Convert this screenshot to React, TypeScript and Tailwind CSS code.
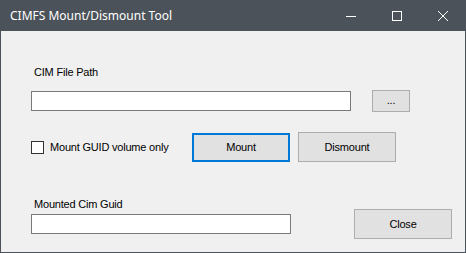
const label = "font-['Liberation_Sans',Arial,sans-serif] text-[11px] leading-[13px] tracking-[-0.2px] text-black";

function CaptionButton({ children }: { children: React.ReactNode }) {
  return <div className="w-[46px] h-full flex items-center justify-center">{children}</div>;
}

function WinButton({ text, className = '' }: { text: string; className?: string }) {
  return (
    <button
      className={`w-[98px] bg-[#e1e1e1] border border-[#adadad] flex items-center justify-center ${label} ${className}`}
    >
      {text}
    </button>
  );
}

export default function App() {
  return (
    <div className="w-[466px] h-[253px] flex flex-col bg-[#4b5259] overflow-hidden">
      {/* Title bar */}
      <div className="h-[31px] shrink-0 flex items-center text-white">
        <span className="pl-[10px] pt-[1px] flex-1 font-['Noto_Sans',sans-serif] text-[12px] leading-none">
          CIMFS Mount/Dismount Tool
        </span>
        <CaptionButton>
          <svg width="10" height="10" viewBox="0 0 10 10">
            <path d="M0 5.5h10" stroke="white" strokeWidth="1" />
          </svg>
        </CaptionButton>
        <CaptionButton>
          <svg width="10" height="10" viewBox="0 0 10 10">
            <rect x="0.5" y="0.5" width="9" height="9" fill="none" stroke="white" strokeWidth="1" />
          </svg>
        </CaptionButton>
        <CaptionButton>
          <svg width="10" height="10" viewBox="0 0 10 10">
            <path d="M0 0L10 10M10 0L0 10" stroke="white" strokeWidth="1" />
          </svg>
        </CaptionButton>
      </div>

      {/* Client area */}
      <div className="flex-1 mx-[1px] mb-[1px] bg-[#f0f0f0] pl-[30px] flex flex-col">
        <div className={`${label} mt-[35px] pl-[3px]`}>CIM File Path</div>

        <div className="mt-[11px] flex items-center gap-[21px]">
          <div className="w-[320px] h-[20px] bg-white border border-[#7a7a7a]" />
          <WinButton text="..." className="!w-[38px] h-[22px] items-end pb-[4px] text-[#444]" />
        </div>

        <div className="mt-[20px] flex items-center">
          <div className="w-[13px] h-[13px] bg-white border border-[#333]" />
          <span className={`${label} ml-[6px] w-[142px]`}>Mount GUID volume only</span>
          <WinButton text="Mount" className="h-[29px] !border-2 !border-[#0078d7]" />
          <WinButton text="Dismount" className="h-[30px] ml-[8px]" />
        </div>

        <div className="mt-auto mb-[18px] flex items-end">
          <div className="flex flex-col">
            <div className={`${label} pl-[3px] mb-[3px]`}>Mounted Cim Guid</div>
            <div className="w-[260px] h-[20px] bg-white border border-[#7a7a7a]" />
          </div>
          <WinButton text="Close" className="h-[30px] ml-[63px] mb-[-5px]" />
        </div>
      </div>
    </div>
  );
}
